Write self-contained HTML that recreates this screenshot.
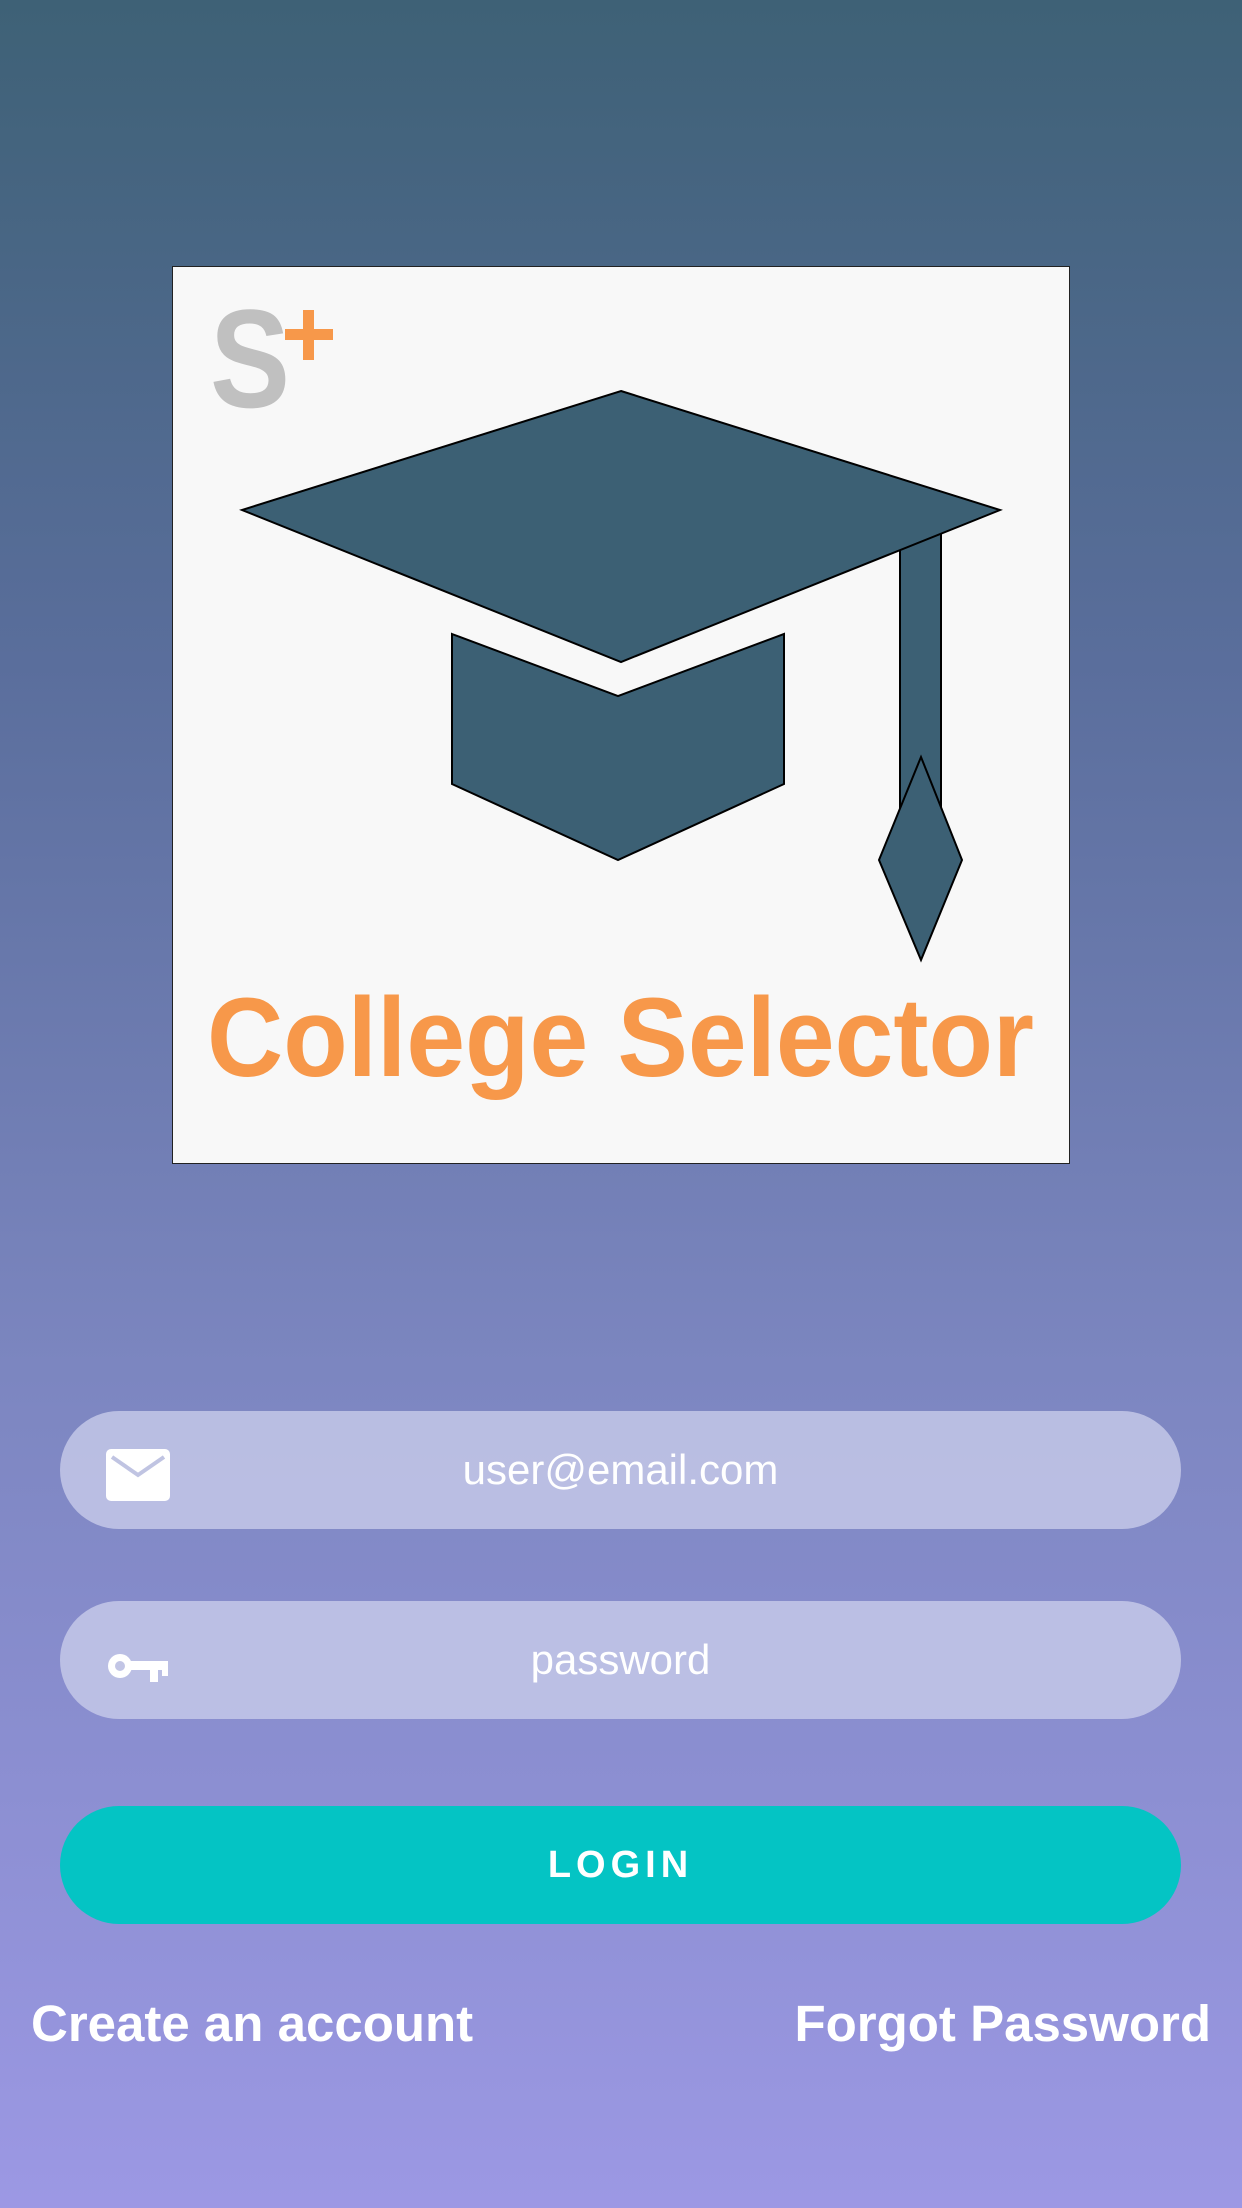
<!DOCTYPE html>
<html><head><meta charset="utf-8"><style>
html,body{margin:0;padding:0}
body{width:1242px;height:2208px;position:relative;overflow:hidden;font-family:"Liberation Sans",sans-serif;
background:linear-gradient(180deg,#3e6176 0%,#5a6e9c 30%,#7c86c0 62%,#9c98e4 100%);}
.logo{position:absolute;left:172px;top:266px;width:898px;height:898px;background:#f8f8f8;border:1px solid #222;box-sizing:border-box}
.pill{position:absolute;left:60px;width:1121px;height:118px;border-radius:59px;color:#fff;font-size:42px;text-align:center;line-height:118px}
.in{background:rgba(200,204,234,0.8)}
.login{background:#04c4c4;font-weight:bold;letter-spacing:5px;font-size:38px}
.link{position:absolute;top:1994px;color:#fff;font-weight:bold;font-size:51px}
</style></head><body>
<div class="logo"></div>
<svg style="position:absolute;left:0;top:0" width="1242" height="1200">
<g fill="#3c6074" stroke="#000" stroke-width="2">
<polygon points="900,549 941,532 941,845 900,845"/>
<polygon points="621,391 1000,510 621,662 242,510"/>
<polygon points="452,634 618,696 784,634 784,784 618,860 452,784"/>
<polygon points="921,757 962,860 921,960 879,860"/>
</g>
<text x="210" y="407" font-family="Liberation Sans" font-weight="bold" font-size="140" fill="#c0c0c0" textLength="80" lengthAdjust="spacingAndGlyphs">S</text>
<rect x="285" y="329" width="48" height="11" fill="#f7984a"/>
<rect x="303" y="310" width="11" height="50" fill="#f7984a"/>
<text x="207" y="1076" font-family="Liberation Sans" font-weight="bold" font-size="112" fill="#f7984a" textLength="827" lengthAdjust="spacingAndGlyphs">College Selector</text>
</svg>
<div class="pill in" style="top:1411px">user@email.com</div>
<div class="pill in" style="top:1601px">password</div>
<div class="pill login" style="top:1806px">LOGIN</div>
<svg style="position:absolute;left:106px;top:1449px" width="64" height="52"><rect x="0" y="0" width="64" height="52" rx="5" fill="#fff"/><polyline points="6,8 32,26 58,8" fill="none" stroke="#c0c4e2" stroke-width="4"/></svg>
<svg style="position:absolute;left:106px;top:1650px" width="62" height="34"><circle cx="14" cy="16" r="12" fill="#fff"/><circle cx="14" cy="16" r="5" fill="#c2c5e5"/><rect x="22" y="11" width="40" height="9" fill="#fff"/><rect x="44" y="18" width="8" height="14" fill="#fff"/><rect x="56" y="18" width="6" height="8" fill="#fff"/></svg>
<div class="link" style="left:31px">Create an account</div>
<div class="link" style="right:31px">Forgot Password</div>
</body></html>
